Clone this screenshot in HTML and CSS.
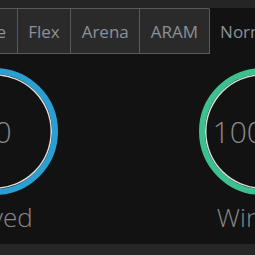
FILE: index.html
```html
<!DOCTYPE html>
<html lang="en">
<head>
  <meta charset="UTF-8">
  <meta name="viewport" content="width=device-width, initial-scale=1.0">
  <title>Queue Stats</title>
  <link rel="stylesheet" href="styles.css">
</head>
<body>

  <div class="top-strip"></div>

  <div class="tabs">
    <div class="tab">Solo Queue</div>
    <div class="tab">Flex</div>
    <div class="tab">Arena</div>
    <div class="tab">ARAM</div>
    <div class="tab active">Normal</div>
  </div>

  <div class="stats">
    <div class="stat">
      <div class="ring played">10</div>
      <div class="stat-label">Played</div>
    </div>
    <div class="stat">
      <div class="ring wins">100.0%</div>
      <div class="stat-label">Winrate</div>
    </div>
  </div>

  <div class="footer"></div>

</body>
</html>
```
FILE: styles.css
```css
/* Basic styling */
body {
  margin: 0;
  background-color: #121212;
  font-family: "Open Sans", sans-serif;
  overflow: hidden;
}

.top-strip {
  height: 8px;
  background: #252525;
}

/* Queue tabs */
.tabs {
  display: flex;
  margin-left: -97px;
  white-space: nowrap;
}

.tab {
  height: 45px;
  line-height: 45px;
  padding: 0 10.5px;
  font-size: 17px;
  color: #8a9199;
  background: #2a2a2a;
  border: 1px solid #5a5a5a;
  border-bottom-width: 0;
  border-right: none;
  box-shadow: inset 0 -1px 0 #5a5a5a;
}

.tab.active {
  background: #121212;
  border-color: transparent;
  border-left: 1px solid #5a5a5a;
  box-shadow: none;
}

/* Stat rings */
.stats {
  display: flex;
  gap: 141px;
  margin-left: -69px;
  margin-top: 14px;
}

.stat {
  display: flex;
  flex-direction: column;
  align-items: center;
  width: 127px;
  flex-shrink: 0;
}

.ring {
  width: 127px;
  height: 127px;
  box-sizing: border-box;
  border-radius: 50%;
  border: 6px solid #2a9fd0;
  box-shadow: inset 0 0 0 1.5px #dcdcdc;
  display: flex;
  align-items: center;
  justify-content: center;
  white-space: nowrap;
  font-size: 30px;
  font-weight: 300;
  color: #8a8a8a;
}

.ring.wins {
  border-color: #3cc08f;
}

.stat-label {
  margin-top: 4px;
  font-size: 26px;
  font-weight: 300;
  color: #888;
  white-space: nowrap;
}

.footer {
  margin-top: 9px;
  height: 20px;
  background: #262626;
}
```
